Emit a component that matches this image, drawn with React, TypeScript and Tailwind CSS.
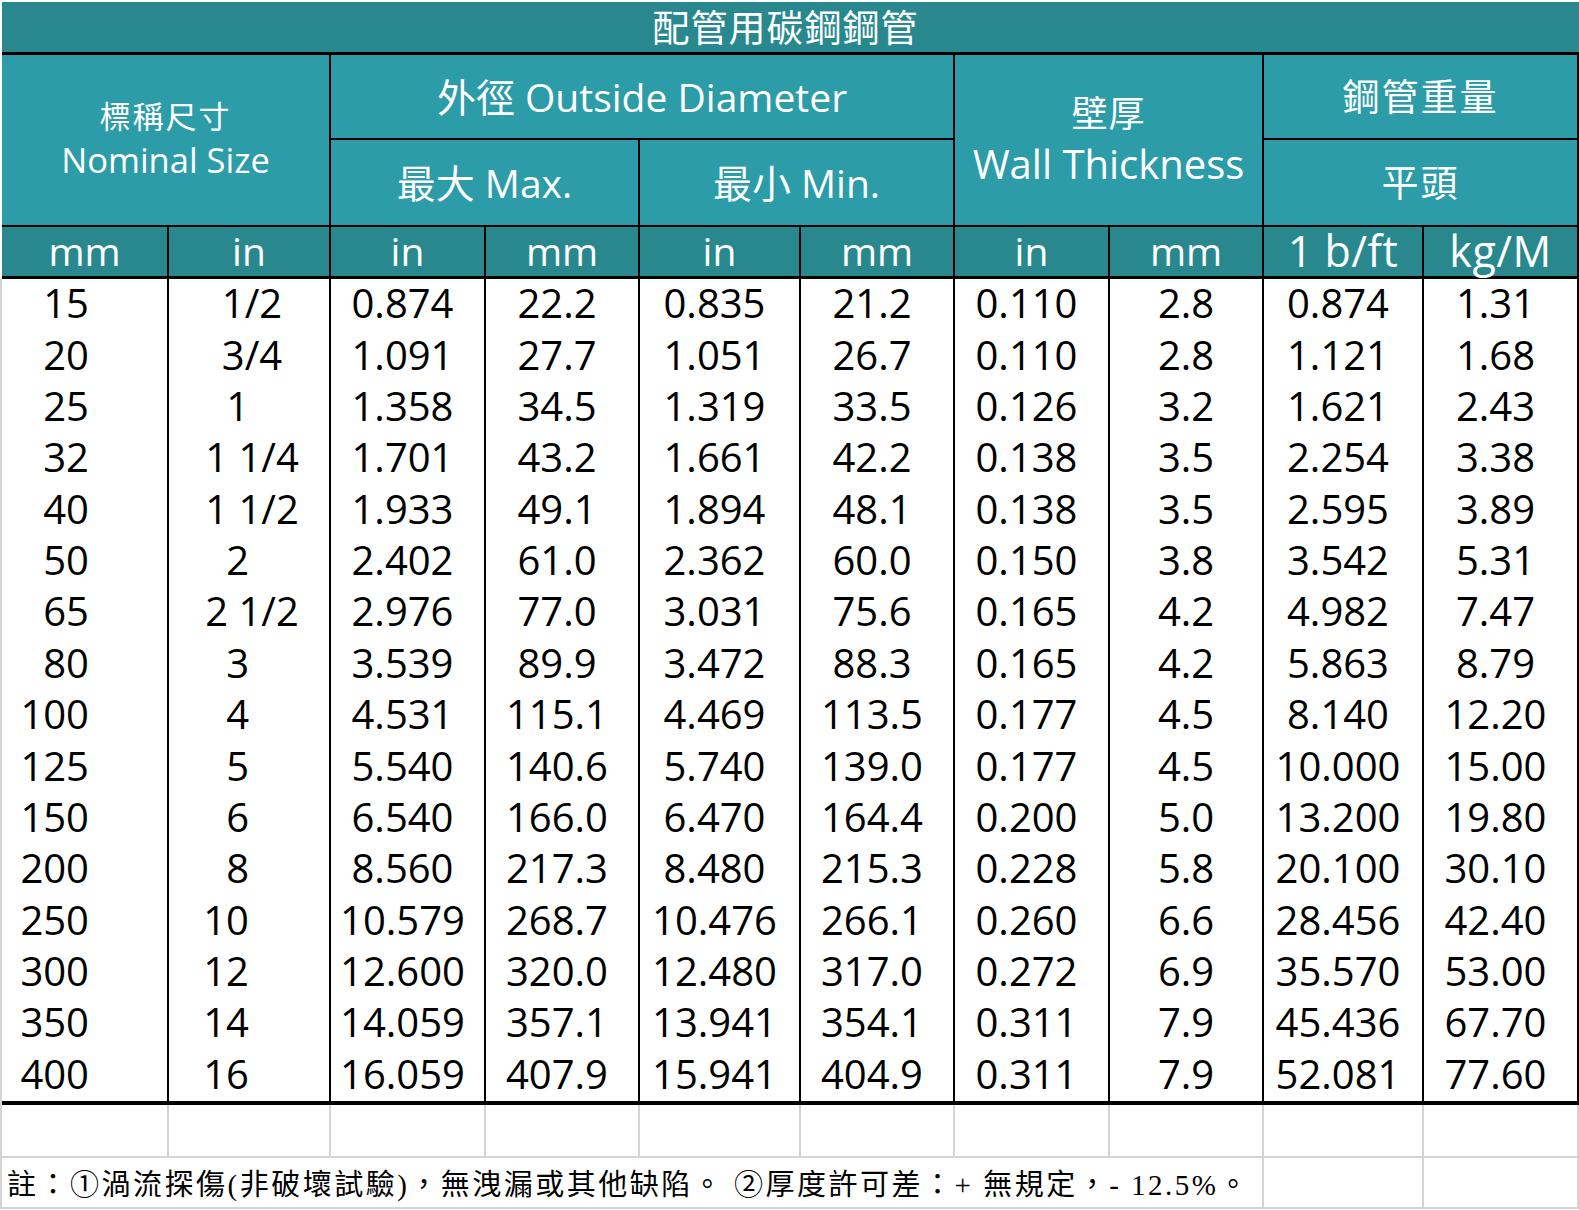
const COLS = 'grid grid-cols-[165px_162px_155px_154px_161px_154px_155px_154px_160px_155px]';

const latin = { fontFamily: "'Open Sans', 'Noto Sans CJK TC', sans-serif" };

type Row = [string, string, string, string, string, string, string, string, string, string];

const rows: Row[] = [
  ['15', '1/2', '0.874', '22.2', '0.835', '21.2', '0.110', '2.8', '0.874', '1.31'],
  ['20', '3/4', '1.091', '27.7', '1.051', '26.7', '0.110', '2.8', '1.121', '1.68'],
  ['25', '1', '1.358', '34.5', '1.319', '33.5', '0.126', '3.2', '1.621', '2.43'],
  ['32', '1 1/4', '1.701', '43.2', '1.661', '42.2', '0.138', '3.5', '2.254', '3.38'],
  ['40', '1 1/2', '1.933', '49.1', '1.894', '48.1', '0.138', '3.5', '2.595', '3.89'],
  ['50', '2', '2.402', '61.0', '2.362', '60.0', '0.150', '3.8', '3.542', '5.31'],
  ['65', '2 1/2', '2.976', '77.0', '3.031', '75.6', '0.165', '4.2', '4.982', '7.47'],
  ['80', '3', '3.539', '89.9', '3.472', '88.3', '0.165', '4.2', '5.863', '8.79'],
  ['100', '4', '4.531', '115.1', '4.469', '113.5', '0.177', '4.5', '8.140', '12.20'],
  ['125', '5', '5.540', '140.6', '5.740', '139.0', '0.177', '4.5', '10.000', '15.00'],
  ['150', '6', '6.540', '166.0', '6.470', '164.4', '0.200', '5.0', '13.200', '19.80'],
  ['200', '8', '8.560', '217.3', '8.480', '215.3', '0.228', '5.8', '20.100', '30.10'],
  ['250', '10', '10.579', '268.7', '10.476', '266.1', '0.260', '6.6', '28.456', '42.40'],
  ['300', '12', '12.600', '320.0', '12.480', '317.0', '0.272', '6.9', '35.570', '53.00'],
  ['350', '14', '14.059', '357.1', '13.941', '354.1', '0.311', '7.9', '45.436', '67.70'],
  ['400', '16', '16.059', '407.9', '15.941', '404.9', '0.311', '7.9', '52.081', '77.60'],
];

const units = ['mm', 'in', 'in', 'mm', 'in', 'mm', 'in', 'mm', '1 b/ft', 'kg/M'];

function cellAlign(col: number, value: string) {
  if (col === 0) return 'justify-end pr-[78px]';
  if (col === 1) return value.includes('/') ? 'justify-center pl-[6px]' : 'justify-end pr-[80px]';
  if (col === 7) return 'justify-center';
  return 'justify-center pr-[10px]';
}

function unitSize(u: string) {
  return u.includes('/') ? 'text-[43px] tracking-[0.5px]' : 'text-[39px]';
}

export default function App() {
  return (
    <div className="w-[1579px] h-[1210px] bg-white pt-[2px] pl-[2px]" style={latin}>
      <div className="w-[1577px]">
        {/* title */}
        <div className="h-[50px] bg-[#28888e] flex items-center justify-center text-white text-[37px] leading-none">
          <span className="pr-[10px] tracking-[1px]">配管用碳鋼鋼管</span>
        </div>

        {/* group headers */}
        <div className={`${COLS} grid-rows-[83px_87px] h-[173px] border-t-[3px] border-r-2 border-black bg-[#2b9ca8] text-white`}>
          <div className="col-span-2 row-span-2 flex flex-col items-center justify-center pb-[4px]">
            <span className="text-[31px] leading-[44px] tracking-[2px]">標稱尺寸</span>
            <span className="text-[34.5px] leading-[44px]">Nominal Size</span>
          </div>
          <div className="col-span-4 border-l-2 border-black flex items-center justify-center text-[39px] leading-none">
            外徑 Outside Diameter
          </div>
          <div className="col-span-2 row-span-2 border-l-2 border-black flex flex-col items-center justify-center pb-[2px]">
            <span className="text-[36px] leading-[50px] tracking-[1px]">壁厚</span>
            <span className="text-[40px] leading-[50px]">Wall Thickness</span>
          </div>
          <div className="col-span-2 border-l-2 border-black flex items-center justify-center text-[37px] leading-none tracking-[2px]">
            鋼管重量
          </div>
          <div className="col-start-3 row-start-2 col-span-2 border-l-2 border-t-2 border-black flex items-center justify-center text-[39px] leading-none">
            最大 Max.
          </div>
          <div className="col-start-5 row-start-2 col-span-2 border-l-2 border-t-2 border-black flex items-center justify-center text-[39px] leading-none">
            最小 Min.
          </div>
          <div className="col-start-9 row-start-2 col-span-2 border-l-2 border-t-2 border-black flex items-center justify-center text-[37px] leading-none tracking-[2px]">
            平頭
          </div>
        </div>

        {/* units */}
        <div className={`${COLS} h-[54px] border-t-2 border-b-[3px] border-r-2 border-black bg-[#28888e] text-white`}>
          {units.map((u, i) => (
            <div
              key={i}
              className={`flex items-center justify-center leading-none pb-[2px] ${unitSize(u)} ${i > 0 ? 'border-l-2 border-black' : ''}`}
            >
              {u}
            </div>
          ))}
        </div>
      </div>

      {/* data */}
      <div className="-ml-[2px] w-[1579px] border-l-2 border-[#d4d4d4]">
        <div className="h-[826px] flex flex-col border-b-4 border-r-2 border-black">
          {rows.map((r, ri) => (
            <div key={ri} className={`${COLS} flex-1`}>
              {r.map((v, ci) => (
                <div
                  key={ci}
                  className={`flex items-center text-[40px] leading-none text-black pb-[3px] ${cellAlign(ci, v)} ${ci > 0 ? 'border-l-2 border-black' : ''}`}
                >
                  {v}
                </div>
              ))}
            </div>
          ))}
        </div>

        {/* empty row */}
        <div className={`${COLS} h-[53px] border-b-2 border-r-2 border-[#d4d4d4]`}>
          {units.map((_, i) => (
            <div key={i} className={i > 0 ? 'border-l-2 border-[#d4d4d4]' : ''} />
          ))}
        </div>

        {/* note */}
        <div className="grid grid-cols-[1260px_160px_155px] h-[51px] border-b-2 border-r-2 border-[#d4d4d4]">
          <div
            className="flex items-center pl-[5px] pt-[6px] text-[29px] leading-none tracking-[2.5px] text-black whitespace-nowrap"
            style={{ fontFamily: "'Liberation Serif', 'Noto Sans CJK TC', serif" }}
          >
            註：①渦流探傷(非破壞試驗)，無洩漏或其他缺陷。 ②厚度許可差：+ 無規定，- 12.5%。
          </div>
          <div className="border-l-2 border-[#d4d4d4]" />
          <div className="border-l-2 border-[#d4d4d4]" />
        </div>
      </div>
    </div>
  );
}
